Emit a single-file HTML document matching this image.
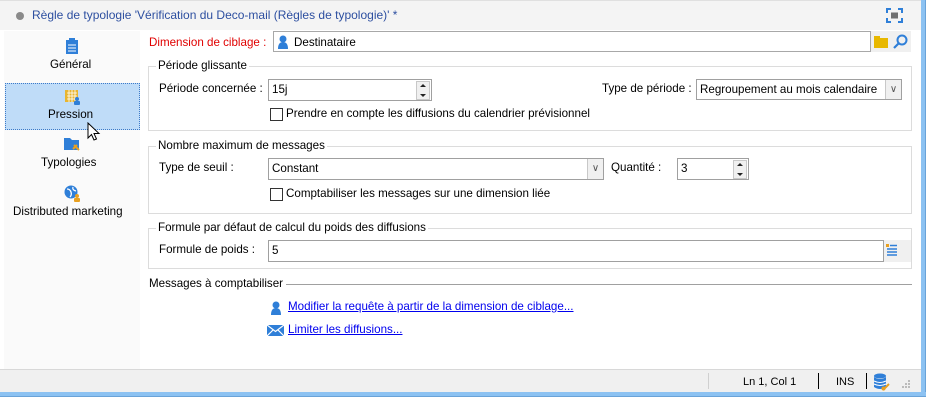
<!DOCTYPE html>
<html><head><meta charset="utf-8"><style>
*{box-sizing:border-box;margin:0;padding:0}
body{width:935px;height:415px;background:#fff;position:relative;overflow:hidden;font-family:"Liberation Sans",sans-serif;font-size:11.6px;color:#000}
.a{position:absolute;white-space:nowrap}
.box{position:absolute;border:1px solid #dcdcdc}
.lg{position:absolute;background:#fff;padding:0 2px;line-height:14px}
.inp{position:absolute;border:1px solid #a0a0a0;background:#fff;height:23px;line-height:21px;padding-left:3px}
.spin{position:absolute;right:1px;top:1px;width:14px;height:19px;background:#f0f0f0;border:1px solid #c8c8c8}
.spin:before{content:"";position:absolute;left:3px;top:2px;border:3px solid transparent;border-bottom:3px solid #222;border-top:0}
.spin:after{content:"";position:absolute;left:3px;bottom:2px;border:3px solid transparent;border-top:3px solid #222;border-bottom:0}
.cb{position:absolute;width:13px;height:13px;border:1px solid #333;background:#fff}
.dd{position:absolute;right:0;top:0;width:16px;height:21px;background:#f0f0f0;border-left:1px solid #c8c8c8;color:#555;font-size:10px;text-align:center;line-height:20px}
a{color:#0000ee;text-decoration:underline}
</style></head><body>
<div class="a" style="left:0;top:0;width:921px;height:392px;background:#fff"></div>
<div class="a" style="left:921px;top:0;width:5px;height:397px;background:#8cc2f2;border-right:1px solid #6aa3d8"></div>
<div class="a" style="left:0;top:392px;width:926px;height:5px;background:#8cc2f2;border-bottom:1px solid #6aa3d8"></div>
<div class="a" style="left:0;top:0;width:921px;height:30px;background:#f4f4f4;border-top:1px solid #e0e0e0"></div>
<div class="a" style="left:16px;top:12px;width:8px;height:8px;border-radius:50%;background:#8a8a8a"></div>
<div class="a" style="left:32px;top:8px;color:#2d4fa0;font-size:12px">Règle de typologie 'Vérification du Deco-mail (Règles de typologie)' *</div>
<svg class="a" style="left:886px;top:8px" width="17" height="15"><path d="M1 5V1H5M12 1H16V5M16 10V14H12M5 14H1V10" stroke="#2f7fd8" stroke-width="2" fill="none"/><rect x="5" y="4.5" width="7" height="6" fill="#707070"/></svg>
<div class="a" style="left:4px;top:31px;width:136px;height:338px;background:#fafafa"></div>
<svg class="a" style="left:65px;top:38px" width="14" height="16"><rect x="1" y="2" width="12" height="14" fill="#2f7fd8"/><rect x="4" y="0" width="6" height="4" fill="#2f7fd8"/><path d="M3 7H11M3 10H11M3 13H11" stroke="#fff"/></svg>
<div class="a" style="left:50px;top:58px">Général</div>
<div class="a" style="left:5px;top:83px;width:135px;height:47px;background:#bfdcf8;border:1px dotted #3d7ac8"></div>
<svg class="a" style="left:64px;top:88px" width="18" height="17"><rect x="1" y="2" width="13" height="12" fill="#e8b530"/><path d="M3 5h10M3 8h10M3 11h8M5 2v12M8 2v12M11 2v12" stroke="#fff" stroke-width=".8"/><circle cx="13" cy="11" r="2" fill="#2f7fd8"/><rect x="10" y="13" width="6" height="4" rx="1" fill="#2f7fd8"/></svg>
<div class="a" style="left:48px;top:108px">Pression</div>
<svg class="a" style="left:87px;top:122px" width="14" height="20"><path d="M1 1V16L4.5 12.5L7 18L9.5 17L7 11.5H12Z" fill="#fff" stroke="#000"/></svg>
<svg class="a" style="left:63px;top:136px" width="18" height="16"><path d="M1 2h6l2 2h7v10H1z" fill="#2f7fd8"/><path d="M11 9l5 5M10 13l4-4" stroke="#e8a020" stroke-width="2"/></svg>
<div class="a" style="left:41px;top:156px">Typologies</div>
<svg class="a" style="left:64px;top:185px" width="18" height="18"><circle cx="7" cy="7" r="6.5" fill="#2f7fd8"/><path d="M3 4q3 0 4 3t-1 5M9 2q-1 3 3 4" stroke="#fff" fill="none" stroke-width="1.3"/><circle cx="13" cy="11" r="2" fill="#e8a020"/><rect x="10" y="13" width="6" height="4" rx="1" fill="#e8a020"/></svg>
<div class="a" style="left:13px;top:205px">Distributed marketing</div>
<div class="a" style="left:149px;top:36px;color:#e00000">Dimension de ciblage :</div>
<div class="inp" style="left:273px;top:31px;width:598px;height:21px;line-height:21px;padding-left:20px;border-color:#a8a8a8">Destinataire</div>
<svg class="a" style="left:277px;top:35px" width="12" height="14"><circle cx="6" cy="4" r="3.5" fill="#2f7fd8"/><path d="M1 14q0-7 5-7t5 7z" fill="#2f7fd8"/></svg>
<div class="a" style="left:871px;top:31px;width:40px;height:21px;background:#f0f0f0"></div>
<svg class="a" style="left:874px;top:36px" width="14" height="12"><rect x="0" y="0" width="6" height="3" fill="#e8b800"/><rect x="0" y="2" width="14" height="10" fill="#e8b800"/></svg>
<svg class="a" style="left:893px;top:34px" width="15" height="15"><circle cx="9" cy="6" r="4.5" stroke="#2f7fd8" stroke-width="2" fill="none"/><path d="M6 9L1 14" stroke="#2f7fd8" stroke-width="2.2"/></svg>
<div class="box" style="left:148px;top:66px;width:764px;height:65px"></div>
<div class="lg" style="left:156px;top:59px">Période glissante</div>
<div class="a" style="left:159px;top:82px">Période concernée :</div>
<div class="inp" style="left:268px;top:79px;width:164px;height:22px;line-height:20px">15j<div class="spin"></div></div>
<div class="a" style="left:602px;top:82px">Type de période :</div>
<div class="inp" style="left:696px;top:79px;width:206px;height:21px;line-height:19px">Regroupement au mois calendaire<div class="dd" style="height:19px">&#8744;</div></div>
<div class="cb" style="left:270px;top:108px"></div>
<div class="a" style="left:286px;top:107px">Prendre en compte les diffusions du calendrier prévisionnel</div>
<div class="box" style="left:148px;top:146px;width:764px;height:68px"></div>
<div class="lg" style="left:156px;top:139px">Nombre maximum de messages</div>
<div class="a" style="left:159px;top:161px">Type de seuil :</div>
<div class="inp" style="left:268px;top:158px;width:336px;height:22px;line-height:20px">Constant<div class="dd" style="height:20px">&#8744;</div></div>
<div class="a" style="left:611px;top:161px">Quantité :</div>
<div class="inp" style="left:677px;top:158px;width:72px;height:22px;line-height:20px">3<div class="spin"></div></div>
<div class="cb" style="left:270px;top:188px"></div>
<div class="a" style="left:286px;top:187px">Comptabiliser les messages sur une dimension liée</div>
<div class="box" style="left:148px;top:228px;width:764px;height:41px"></div>
<div class="lg" style="left:156px;top:221px">Formule par défaut de calcul du poids des diffusions</div>
<div class="a" style="left:159px;top:243px">Formule de poids :</div>
<div class="inp" style="left:268px;top:240px;width:616px;height:22px;line-height:20px">5</div>
<div class="a" style="left:884px;top:240px;width:27px;height:22px;background:#f0f0f0"></div>
<svg class="a" style="left:886px;top:244px" width="12" height="12"><rect x="0" y="0" width="3" height="3" fill="#e8a020"/><path d="M4 1.5h7M1 5h10M1 8h10M1 11h10" stroke="#2f7fd8" stroke-width="1.5"/></svg>
<div class="a" style="left:149px;top:277px">Messages à comptabiliser</div>
<div class="a" style="left:286px;top:284px;width:626px;height:1px;background:#a0a0a0"></div>
<svg class="a" style="left:270px;top:301px" width="12" height="14"><circle cx="6" cy="4" r="3.5" fill="#2f7fd8"/><path d="M1 14q0-7 5-7t5 7z" fill="#2f7fd8"/></svg>
<a class="a" style="left:288px;top:300px">Modifier la requête à partir de la dimension de ciblage...</a>
<svg class="a" style="left:267px;top:325px" width="17" height="11"><rect x="0" y="0" width="17" height="11" fill="#2f7fd8"/><path d="M0 0L8.5 6.5L17 0M0 11L6 5M17 11L11 5" stroke="#fff" stroke-width="1.2" fill="none"/></svg>
<a class="a" style="left:288px;top:323px">Limiter les diffusions...</a>
<div class="a" style="left:0;top:369px;width:921px;height:23px;background:#f0f0f0;border-top:1px solid #d8d8d8"></div>
<div class="a" style="left:708px;top:373px;width:1px;height:16px;background:#d0d0d0"></div>
<div class="a" style="left:743px;top:376px;font-size:11px">Ln 1, Col 1</div>
<div class="a" style="left:818px;top:373px;width:1px;height:16px;background:#000"></div>
<div class="a" style="left:836px;top:376px;font-size:11px">INS</div>
<div class="a" style="left:866px;top:373px;width:1px;height:16px;background:#000"></div>
<svg class="a" style="left:873px;top:373px" width="18" height="18"><ellipse cx="7" cy="3" rx="6" ry="2.5" fill="#2f7fd8"/><path d="M1 4v10q6 4 12 0V4q-6 4-12 0" fill="#2f7fd8"/><path d="M1 8q6 3 12 0M1 11q6 3 12 0" stroke="#fff" fill="none"/><path d="M10 17l6-6" stroke="#e8a020" stroke-width="2"/><circle cx="10.5" cy="15.5" r="2" fill="#e8a020"/></svg>
<svg class="a" style="left:901px;top:379px" width="10" height="10" fill="#bbb"><rect x="7" y="1" width="2" height="2"/><rect x="4" y="4" width="2" height="2"/><rect x="7" y="4" width="2" height="2"/><rect x="1" y="7" width="2" height="2"/><rect x="4" y="7" width="2" height="2"/><rect x="7" y="7" width="2" height="2"/></svg>
</body></html>
